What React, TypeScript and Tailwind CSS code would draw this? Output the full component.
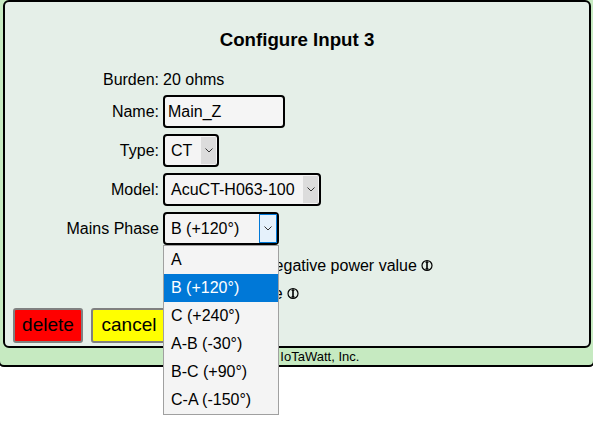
import React from 'react';

const Chevron: React.FC = () => (
  <svg width="8" height="5" viewBox="0 0 8 5" fill="none">
    <path d="M0.5 0.5 L4 4 L7.5 0.5" stroke="#333" strokeWidth="1" />
  </svg>
);

const InfoIcon: React.FC = () => (
  <svg width="12" height="13" viewBox="0 0 12 13" className="inline-block ml-[4px] -mt-[2px]" fill="none">
    <circle cx="6" cy="6.5" r="5" stroke="#000" strokeWidth="1.2" />
    <path d="M6 2.5 V10.5 M4.5 3 H7.5 M4.5 10 H7.5" stroke="#000" strokeWidth="1.6" />
  </svg>
);

const Select: React.FC<{ value: string; width: string; focused?: boolean }> = ({ value, width, focused }) => (
  <div className={`${width} h-[33px] border-2 border-black rounded-[4px] bg-[#f4f4f4] flex items-stretch`}>
    <div className="flex-1 pl-[6px] leading-[29px] whitespace-nowrap overflow-hidden">{value}</div>
    {focused ? (
      <div className="w-[18px] bg-[#e5f1fb] border border-[#0078d7] flex items-center justify-center">
        <Chevron />
      </div>
    ) : (
      <div className="w-[15px] my-[1px] mr-[1px] bg-[#dcdcdc] flex items-center justify-center">
        <Chevron />
      </div>
    )}
  </div>
);

const phases = ['A', 'B (+120°)', 'C (+240°)', 'A-B (-30°)', 'B-C (+90°)', 'C-A (-150°)'];

export default function App() {
  return (
    <div className="relative w-[593px] h-[425px] overflow-hidden bg-white text-black text-[16px] font-['Liberation_Sans',Arial,sans-serif]">
      <div className="-mt-[6px] -mx-[2px] border-2 border-black rounded-[6px] bg-[#c6eac1] pt-[4px] pl-[3px] pr-[2px]">
        <div className="h-[348px] border-2 border-black rounded-[6px] bg-[#e5efe8] flex flex-col">
          <h2 className="pt-[28px] text-center text-[18.7px] font-bold leading-[20px]">Configure Input 3</h2>

          <div className="mt-[21px] flex h-[18px] leading-[18px]">
            <div className="w-[154px] mr-[4px] text-right">Burden:</div>
            <div>20 ohms</div>
          </div>

          <div className="mt-[6px] flex items-center h-[33px]">
            <div className="w-[154px] mr-[4px] text-right">Name:</div>
            <div className="w-[122px] h-[33px] border-2 border-black rounded-[4px] bg-[#f5f5f5] pl-[3px] leading-[29px]">Main_Z</div>
          </div>

          <div className="mt-[6px] flex items-center h-[33px]">
            <div className="w-[154px] mr-[4px] text-right">Type:</div>
            <Select value="CT" width="w-[56px]" />
          </div>

          <div className="mt-[6px] flex items-center h-[33px]">
            <div className="w-[154px] mr-[4px] text-right">Model:</div>
            <Select value="AcuCT-H063-100" width="w-[158px]" />
          </div>

          <div className="mt-[6px] flex items-center h-[33px]">
            <div className="w-[154px] mr-[4px] text-right">Mains Phase</div>
            <Select value="B (+120°)" width="w-[116px]" focused />
          </div>

          <div className="mt-[7px] flex items-center h-[28px] pl-[201px]">
            <input type="checkbox" className="w-[13px] h-[13px] mr-[4px]" />
            <span>Allow negative power value</span>
            <InfoIcon />
          </div>

          <div className="flex items-center h-[28px] pl-[201px]">
            <input type="checkbox" className="w-[13px] h-[13px] mr-[4px]" />
            <span>Reverse</span>
            <InfoIcon />
          </div>

          <div className="flex items-center gap-[8px] pl-[8px] h-[35px]">
            <button className="w-[70px] h-[35px] border-2 border-[#808080] rounded-[3px] bg-[#ff0000] text-[19px]">delete</button>
            <button className="w-[76px] h-[35px] border-2 border-[#808080] rounded-[3px] bg-[#ffff00] text-[19px]">cancel</button>
          </div>
        </div>
        <div className="h-[17px] text-center text-[13px] leading-[17px]">© 2019 IoTaWatt, Inc.</div>
      </div>

      <div className="absolute left-[163px] top-[245px] w-[116px] border border-[#a0a0a0] bg-[#f4f4f4]">
        {phases.map(p => (
          <div
            key={p}
            className={`h-[28px] pl-[7px] leading-[28px] whitespace-nowrap ${p === 'B (+120°)' ? 'bg-[#0078d7] text-white' : ''}`}
          >
            {p}
          </div>
        ))}
      </div>
    </div>
  );
}
